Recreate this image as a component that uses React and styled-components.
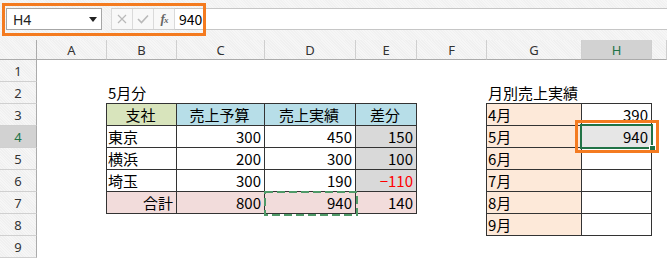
import React from "react"
import styled, { createGlobalStyle, css } from "styled-components"

const GlobalStyle = createGlobalStyle`
  html, body {
    margin: 0;
    padding: 0;
    background: #fff;
  }
  body {
    font-family: "Noto Sans CJK JP", "Noto Sans", sans-serif;
  }
`

const Page = styled.div`
  position: relative;
  width: 667px;
  height: 258px;
  overflow: hidden;
  background: #fff;
`

const Toolbar = styled.div`
  height: 40px;
  box-sizing: border-box;
  padding-top: 8px;
  background: repeating-linear-gradient(45deg, #f1f1f1 0 1px, #f6f6f6 1px 2px);
`

const FormulaRow = styled.div`
  display: flex;
  height: 22px;
`

const NameBox = styled.div`
  box-sizing: border-box;
  width: 96px;
  margin-left: 6px;
  display: flex;
  align-items: center;
  justify-content: space-between;
  padding: 0 4px 0 6px;
  background: #fff;
  border: 1px solid #a6a6a6;
  font: 14px "Noto Sans", sans-serif;
  color: #222;
`

const DropArrow = styled.span`
  width: 0;
  height: 0;
  border-left: 4px solid transparent;
  border-right: 4px solid transparent;
  border-top: 5px solid #222;
`

const ButtonGroup = styled.div`
  display: flex;
  margin-left: 9px;
  box-sizing: border-box;
  border-top: 1px solid #cfcfcf;
  border-bottom: 1px solid #cfcfcf;
  border-left: 1px solid #dadada;
  background: #f8f8f8;
`

const IconButton = styled.div`
  width: 20px;
  display: flex;
  align-items: center;
  justify-content: center;
  border-right: 1px solid #dadada;
  color: ${({ $dim }) => ($dim ? "#b9b9b9" : "#555")};
`

const FxLabel = styled.span`
  font-family: "Liberation Serif", serif;
  font-style: italic;
  font-weight: 700;
  font-size: 13px;
  color: #666;
  letter-spacing: -1px;

  small {
    font-size: 9px;
  }
`

const FormulaInput = styled.div`
  flex: 1;
  box-sizing: border-box;
  display: flex;
  align-items: center;
  padding-left: 4px;
  background: #fff;
  border-top: 1px solid #c6c6c6;
  border-bottom: 1px solid #c6c6c6;
  font-size: 14px;
  color: #000;
`

const Sheet = styled.div`
  display: grid;
  grid-template-columns: 37px 70px 70px 88px 91px 61px 70px 95px 70px 1fr;
  grid-template-rows: 20px repeat(9, 22px);
  background: #fff;
`

const headerBg = "repeating-linear-gradient(45deg, #f0f0f0 0 1px, #f6f6f6 1px 2px)"

const Corner = styled.div`
  background: ${headerBg};
  border-right: 1px solid #ababab;
  border-bottom: 1px solid #ababab;
`

const ColHead = styled.div`
  display: flex;
  align-items: center;
  justify-content: center;
  background: ${({ $active }) => ($active ? "#d2d2d2" : headerBg)};
  color: ${({ $active }) => ($active ? "#217346" : "#333")};
  border-right: 1px solid #cfcfcf;
  border-bottom: 1px solid #ababab;
  font: 13px "Noto Sans", sans-serif;
`

const RowHead = styled.div`
  display: flex;
  align-items: center;
  justify-content: center;
  background: ${({ $active }) => ($active ? "#d2d2d2" : headerBg)};
  color: ${({ $active }) => ($active ? "#217346" : "#333")};
  border-right: 1px solid #ababab;
  border-bottom: 1px solid #d0d0d0;
  font: 13px "Noto Sans", sans-serif;
`

const justify = { left: "flex-start", center: "center", right: "flex-end" }

const Cell = styled.div`
  position: relative;
  display: flex;
  align-items: center;
  justify-content: ${({ $align }) => justify[$align || "left"]};
  padding: 0 3px 0 1px;
  font-size: 15px;
  line-height: 20px;
  white-space: nowrap;
  color: ${({ $color }) => $color || "#000"};
  background: ${({ $bg }) => $bg || "transparent"};

  ${({ $boxed }) =>
    $boxed &&
    css`
      border: 1px solid #333;
      margin: -1px 0 0 -1px;
    `}

  ${({ $selected }) =>
    $selected &&
    css`
      z-index: 2;
      &::after {
        content: "";
        position: absolute;
        inset: -2px -2px -2px -2px;
        border: 2px solid #217346;
      }
      &::before {
        content: "";
        position: absolute;
        right: -5px;
        bottom: -5px;
        width: 5px;
        height: 5px;
        background: #217346;
        border: 1px solid #fff;
        z-index: 1;
      }
    `}
`

const Marquee = styled.svg`
  position: absolute;
  left: -2px;
  top: -2px;
  z-index: 2;
  overflow: visible;
`

const Annotation = styled.div`
  position: absolute;
  z-index: 5;
  box-sizing: border-box;
  left: ${({ $x }) => $x}px;
  top: ${({ $y }) => $y}px;
  width: ${({ $w }) => $w}px;
  height: ${({ $h }) => $h}px;
  border: 3px solid #f47b20;
  pointer-events: none;
`

const GREEN = "#d8e4bc"
const BLUE = "#b7dee8"
const GRAY = "#d9d9d9"
const PINK = "#f2dcdb"
const PEACH = "#fde9d9"
const SEL = "#e6e6e6"

const columns = ["A", "B", "C", "D", "E", "F", "G", "H", ""]

const cells = {
  B2: { v: "5月分" },
  G2: { v: "月別売上実績" },

  B3: { v: "支社", bg: GREEN, align: "center", boxed: true },
  C3: { v: "売上予算", bg: BLUE, align: "center", boxed: true },
  D3: { v: "売上実績", bg: BLUE, align: "center", boxed: true },
  E3: { v: "差分", bg: BLUE, align: "center", boxed: true },

  B4: { v: "東京", boxed: true },
  C4: { v: "300", align: "right", boxed: true },
  D4: { v: "450", align: "right", boxed: true },
  E4: { v: "150", align: "right", bg: GRAY, boxed: true },

  B5: { v: "横浜", boxed: true },
  C5: { v: "200", align: "right", boxed: true },
  D5: { v: "300", align: "right", boxed: true },
  E5: { v: "100", align: "right", bg: GRAY, boxed: true },

  B6: { v: "埼玉", boxed: true },
  C6: { v: "300", align: "right", boxed: true },
  D6: { v: "190", align: "right", boxed: true },
  E6: { v: "−110", align: "right", bg: GRAY, color: "#ff0000", boxed: true },

  B7: { v: "合計", align: "right", bg: PINK, boxed: true },
  C7: { v: "800", align: "right", bg: PINK, boxed: true },
  D7: { v: "940", align: "right", bg: PINK, boxed: true, marquee: true },
  E7: { v: "140", align: "right", bg: PINK, boxed: true },

  G3: { v: "4月", bg: PEACH, boxed: true },
  H3: { v: "390", align: "right", boxed: true },
  G4: { v: "5月", bg: PEACH, boxed: true },
  H4: { v: "940", align: "right", bg: SEL, boxed: true, selected: true },
  G5: { v: "6月", bg: PEACH, boxed: true },
  H5: { boxed: true },
  G6: { v: "7月", bg: PEACH, boxed: true },
  H6: { boxed: true },
  G7: { v: "8月", bg: PEACH, boxed: true },
  H7: { boxed: true },
  G8: { v: "9月", bg: PEACH, boxed: true },
  H8: { boxed: true },
}

const CrossIcon = () => (
  <svg width="10" height="10" viewBox="0 0 10 10">
    <path d="M1 1 L9 9 M9 1 L1 9" stroke="currentColor" strokeWidth="1.2" fill="none" />
  </svg>
)

const CheckIcon = () => (
  <svg width="12" height="10" viewBox="0 0 12 10">
    <path d="M1 5 L4.5 8.5 L11 1.5" stroke="currentColor" strokeWidth="1.6" fill="none" />
  </svg>
)

// dashed copy border around the D7 cell (cell box is 92x23)
const MarchingAnts = () => (
  <Marquee width="96" height="27" viewBox="0 0 96 27">
    <rect
      x="2"
      y="2"
      width="92"
      height="23"
      fill="none"
      stroke="#4f9a68"
      strokeWidth="2"
      strokeDasharray="8 4"
    />
  </Marquee>
)

const rows = [1, 2, 3, 4, 5, 6, 7, 8, 9]

const App = () => (
  <Page>
    <GlobalStyle />
    <Toolbar>
      <FormulaRow>
        <NameBox>
          <span>H4</span>
          <DropArrow />
        </NameBox>
        <ButtonGroup>
          <IconButton $dim>
            <CrossIcon />
          </IconButton>
          <IconButton $dim>
            <CheckIcon />
          </IconButton>
          <IconButton>
            <FxLabel>
              f<small>x</small>
            </FxLabel>
          </IconButton>
        </ButtonGroup>
        <FormulaInput>940</FormulaInput>
      </FormulaRow>
    </Toolbar>

    <Sheet>
      <Corner />
      {columns.map((c, i) => (
        <ColHead key={`h${i}`} $active={c === "H"}>
          {c}
        </ColHead>
      ))}
      {rows.map((r) => (
        <React.Fragment key={r}>
          <RowHead $active={r === 4}>{r}</RowHead>
          {columns.map((c, i) => {
            const cell = cells[`${c}${r}`] || {}
            return (
              <Cell
                key={`${r}-${i}`}
                $align={cell.align}
                $bg={cell.bg}
                $color={cell.color}
                $boxed={cell.boxed}
                $selected={cell.selected}
              >
                {cell.v}
                {cell.marquee && <MarchingAnts />}
              </Cell>
            )
          })}
        </React.Fragment>
      ))}
    </Sheet>

    <Annotation $x={2} $y={3} $w={204} $h={33} />
    <Annotation $x={575} $y={120} $w={84} $h={33} />
  </Page>
)

export default App
